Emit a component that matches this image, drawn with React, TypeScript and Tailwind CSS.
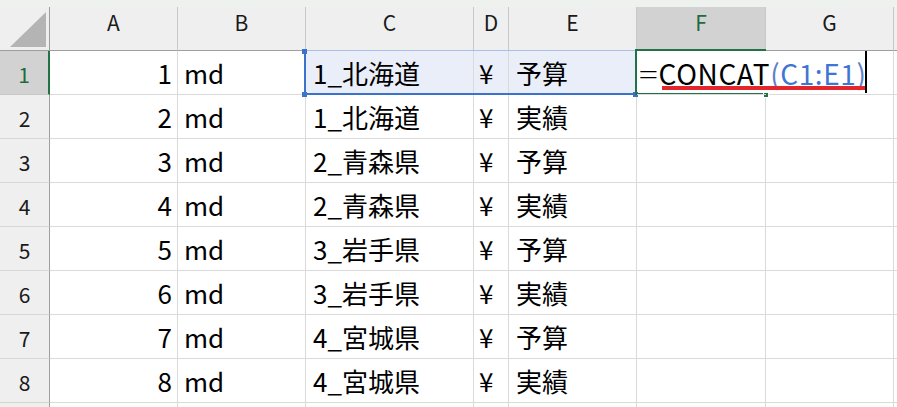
const cols = ["A", "B", "C", "D", "E", "F", "G", ""]

const data: [number, string, string][] = [
  [1, "1_北海道", "予算"],
  [2, "1_北海道", "実績"],
  [3, "2_青森県", "予算"],
  [4, "2_青森県", "実績"],
  [5, "3_岩手県", "予算"],
  [6, "3_岩手県", "実績"],
  [7, "4_宮城県", "予算"],
  [8, "4_宮城県", "実績"],
]

const cell = "flex items-center border-r border-b border-[#dadada] leading-none text-[26px] text-black"

function ColHeader({ label }: { label: string }) {
  const active = label === "F"
  return (
    <div
      className={
        active
          ? "flex justify-center pt-[5px] border-r border-[#c8c8c8] border-b-2 border-b-[#217346] bg-[#d2d2d2] text-[21px] leading-none text-[#1d6b3e]"
          : "flex justify-center pt-[5px] border-r border-b border-[#c8c8c8] border-b-[#9e9e9e] bg-[#efefef] text-[21px] leading-none text-[#1a1a1a]"
      }
    >
      {label}
    </div>
  )
}

function RowHeader({ n }: { n: number | null }) {
  const active = n === 1
  return (
    <div
      className={
        active
          ? "flex items-center justify-center pt-[4px] border-b border-[#c8c8c8] border-r-2 border-r-[#217346] bg-[#d2d2d2] text-[21px] leading-none text-[#1d6b3e]"
          : "flex items-center justify-center pt-[4px] border-b border-[#d6d6d6] border-r border-r-[#9e9e9e] bg-[#efefef] text-[21px] leading-none text-[#1a1a1a]"
      }
    >
      {n}
    </div>
  )
}

export default function App() {
  return (
    <div className="h-[407px] w-[897px] overflow-hidden bg-white font-['Noto_Sans_CJK_JP','Noto_Sans',sans-serif]">
      <div className="h-[7px] bg-[#edf2ef]" />
      <div className="relative grid w-max grid-cols-[50px_128px_128px_168px_35px_128px_129px_128px_128px] grid-rows-[44px_repeat(9,44px)]">
        {/* corner */}
        <div className="relative border-r border-b border-r-[#9e9e9e] border-b-[#9e9e9e] bg-[#efefef]">
          <svg className="absolute left-0 top-0" width="49" height="43" viewBox="0 0 49 43">
            <polygon points="10,40 46,40 46,5" fill="#b4b4b4" />
          </svg>
        </div>
        {cols.map((c, i) => (
          <ColHeader key={i} label={c} />
        ))}

        {data.map(([n, pref, kind]) => {
          const sel = n === 1
          return [
            <RowHeader key={`h${n}`} n={n} />,
            <div key={`a${n}`} className={`${cell} justify-end pr-[5px]`}>{n}</div>,
            <div key={`b${n}`} className={`${cell} pl-[6px]`}>md</div>,
            <div key={`c${n}`} className={`${cell} pl-[7px] ${sel ? "bg-[#e9eef8]" : ""}`}>{pref}</div>,
            <div key={`d${n}`} className={`${cell} pl-[5px] ${sel ? "bg-[#e9eef8]" : ""}`}>¥</div>,
            <div key={`e${n}`} className={`${cell} pl-[7px] ${sel ? "bg-[#e9eef8]" : ""}`}>{kind}</div>,
            sel ? (
              <div key={`f${n}`} className="relative z-10 flex items-center whitespace-nowrap border-b border-[#dadada] pl-[4px] text-[28px] leading-none tracking-[0.6px] text-black">
                <span className="mr-[2px] font-light scale-x-125">=</span>
                <span>CONCAT</span>
                <span className="text-[#5b82c9]">(</span>
                <span className="text-[#3f76d4]">C1:E1</span>
                <span className="text-[#5b82c9]">)</span>
              </div>
            ) : (
              <div key={`f${n}`} className={cell} />
            ),
            <div key={`g${n}`} className={cell} />,
            <div key={`x${n}`} className={cell} />,
          ]
        })}

        {/* partial row 9 */}
        <RowHeader n={null} />
        {[0, 1, 2, 3, 4, 5, 6, 7].map((i) => (
          <div key={`r9${i}`} className={cell} />
        ))}

        {/* range reference C1:E1 */}
        <div className="pointer-events-none absolute left-[304px] top-[43px] h-[45px] w-[332px] border-t border-l-2 border-b-2 border-t-[#a9bfe6] border-l-[#3b73cc] border-b-[#3b73cc]" />
        <div className="absolute left-[302px] top-[42px] h-[5px] w-[5px] bg-[#3b73cc]" />
        <div className="absolute left-[302px] top-[85px] h-[5px] w-[5px] bg-[#3b73cc]" />
        <div className="absolute left-[633px] top-[85px] h-[5px] w-[5px] bg-[#3b73cc]" />

        {/* active cell F1 */}
        <div className="pointer-events-none absolute left-[635px] top-[42px] h-[46px] w-[131px] border-2 border-r-0 border-[#217346]" />
        <div className="absolute left-[763px] top-[85px] h-[6px] w-[6px] border border-white bg-[#217346]" />

        {/* caret and red underline */}
        <div className="absolute left-[865px] top-[44px] z-20 h-[42px] w-[1.5px] bg-black" />
        <div className="absolute left-[662px] top-[79px] z-20 h-[4px] w-[203px] bg-[#e3262b]" />
      </div>
    </div>
  )
}
